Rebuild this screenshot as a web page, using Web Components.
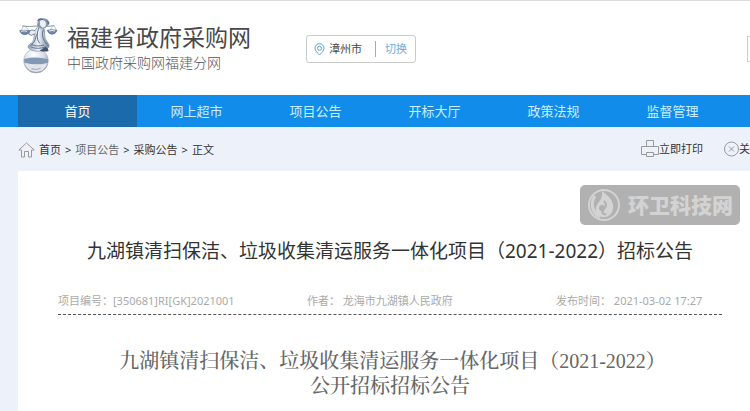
<!doctype html>
<html lang="zh-CN">
  <head>
    <meta charset="utf-8">
    <title>福建省政府采购网</title>
    <style>
      body {
        margin: 0;
        overflow: hidden;
        background: #edf1fa;
        color: #333;
        font: 11px/16px "Noto Sans", "Noto Sans CJK SC", sans-serif;
      }
    </style>
  </head>
  <body>
    <template id="gp-header">
      <style>
        :host {
          display: flex;
          align-items: center;
          height: 94px;
          border-top: 1px solid #ddd;
          padding-left: 18px;
          background: #fff;
        }
        .logo { width: 40px; height: 57px; flex: none; margin-bottom: 6px; }
        .names { margin: 0 55px 0 9px; }
        h1 { margin: 0; font-size: 23px; line-height: 30px; font-weight: 400; color: #484848; }
        p { margin: 0; font-size: 14px; line-height: 22px; font-weight: 300; color: #555; }
        .city {
          display: flex;
          align-items: center;
          box-sizing: border-box;
          width: 110px;
          height: 28px;
          border: 1px solid #ccc;
          border-radius: 3px;
          padding: 0 8px 0 7px;
          gap: 4px;
        }
        .city span { flex: 1; color: #444; }
        .city a { border-left: 1px solid #aaa; padding-left: 9px; color: #6aaee0; text-decoration: none; }
        .city, input { margin-top: 2px; }
        input {
          width: 3px;
          height: 26px;
          box-sizing: border-box;
          margin-left: auto;
          border: 1px solid #ccc;
          border-right: 0;
          padding: 0;
        }
      </style>
      <svg class="logo" viewBox="0 0 120 171" aria-hidden="true">
        <defs>
          <radialGradient id="ball" cx=".4" cy=".25" r=".8">
            <stop offset="0" stop-color="#fff"/>
            <stop offset=".55" stop-color="#d6dae5"/>
            <stop offset="1" stop-color="#76809a"/>
          </radialGradient>
          <linearGradient id="robe">
            <stop offset="0" stop-color="#8fa0b8"/>
            <stop offset=".5" stop-color="#f0f3f8"/>
            <stop offset="1" stop-color="#6d7f99"/>
          </linearGradient>
        </defs>
        <circle cx="54" cy="131" r="37" fill="url(#ball)" stroke="#b5bac8" stroke-width="2"/>
        <path d="M18 126q36 -9 72 1l-1 12q-36 7 -70 -2z" fill="#8299b6"/>
        <path d="M20 138q34 10 68 0q-7 26 -33 27q-26 -1 -35 -27" fill="#e3e5ec"/>
        <path d="M40 154q13 7 28 -1" fill="none" stroke="#b2b7cb" stroke-width="4"/>
        <g transform="translate(0 -7)">
          <path d="M60 35q-14 13 -12 31q0 17 -15 24q-8 8 6 16q22 9 48 -3q11 -7 3 -18q-11 -13 -10 -27q4 -14 -8 -23z" fill="url(#robe)" stroke="#8796ad" stroke-width="2"/>
          <path d="M63 38q-12 29 2 48M56 59q-4 23 -17 34M76 44q-9 23 10 45M37 96q20 10 47 0M38 88q15 10 40 3" fill="none" stroke="#667892" stroke-width="3"/>
          <path d="M82 97q9 3 10 12q-12 4 -27 -1" fill="#40526e"/>
          <path d="M51 48q-14 -5 -18 5q-4 7 7 9l12 -5" fill="#e9edf4" stroke="#7889a3" stroke-width="3"/>
          <path d="M12 34q23 3 43 0q20 3 54 -1" fill="none" stroke="#8b949f" stroke-width="3"/>
          <path d="M18 33L9 48M19 33l14 14M106 32L96 47M107 32l8 14" stroke="#a2aab8" stroke-width="2"/>
          <path d="M5 48q14 -3 31 0q-3 12 -16 12q-11 0 -15 -12M88 47q14 -4 29 0q-3 11 -15 12q-11 -1 -14 -12" fill="#7187a8" stroke="#596b87" stroke-width="2"/>
          <path d="M9 50q10 -3 18 0M93 49q9 -3 18 0" stroke="#e6edf7" stroke-width="3" fill="none"/>
        </g>
        <g transform="translate(4 -2)">
          <path d="M55 16q-3 -13 14 -10q14 -1 19 8q7 8 -4 15q-5 9 -16 8q-13 -1 -15 -10z" fill="#8798b3"/>
          <path d="M62 14q12 -8 18 5q1 14 -10 15q-11 -5 -8 -20" fill="#edf0f5"/>
          <path d="M55 12q8 -7 17 -2M82 13q8 4 4 11" stroke="#4b5f7d" stroke-width="3" fill="none"/>
        </g>
      </svg>
      <div class="names">
        <h1>福建省政府采购网</h1>
        <p>中国政府采购网福建分网</p>
      </div>
      <div class="city">
        <svg width="11" height="13" viewBox="0 0 11 13" fill="none" stroke="#55a5d5" aria-hidden="true">
          <path d="M5.500 12C3 9.500 1 7.500 1 5.200a4.500 4.500 0 0 1 9 0C10 7.500 8 9.500 5.500 12z"/>
          <circle cx="5.500" cy="5.300" r="2"/>
        </svg>
        <span>漳州市</span>
        <a href="#">切换</a>
      </div>
      <input type="text" aria-label="搜索">
    </template>

    <template id="gp-nav">
      <style>
        :host { display: block; background: #128cea; padding-left: 18px; }
        nav { display: flex; }
      </style>
      <nav><slot></slot></nav>
    </template>

    <template id="gp-nav-item">
      <style>
        :host { display: block; flex: 0 0 119px; }
        :host([active]) { background: #1b6bac; }
        a {
          display: block;
          font-size: 13px;
          line-height: 32px;
          text-align: center;
          color: #c8f0ff;
          text-decoration: none;
        }
        :host([active]) a { color: #fff; }
      </style>
      <a href="#"><slot></slot></a>
    </template>

    <template id="gp-toolbar">
      <style>
        :host { display: flex; align-items: center; height: 44px; padding-left: 18px; }
        nav { display: flex; align-items: center; gap: 4px; margin-right: auto; padding-top: 2px; }
        svg { flex: none; fill: none; stroke: #999; }
        a { color: #333; text-decoration: none; }
        a.dim { color: #666; }
        button {
          display: flex;
          align-items: center;
          border: 0;
          padding: 0;
          background: none;
          color: #333;
          font: inherit;
        }
        .print { margin-right: 21px; }
      </style>
      <nav aria-label="当前位置">
        <svg width="17" height="16" viewBox="0 0 17 16" aria-hidden="true">
          <path d="M3.500 8H.8L8.500 1l7.700 7h-2.700M3.500 8v7h3V9.500h4V15h3V8"/>
        </svg>
        <a href="#">首页</a><span>&gt;</span>
        <a href="#" class="dim">项目公告</a><span>&gt;</span>
        <a href="#">采购公告</a><span>&gt;</span>
        <a href="#">正文</a>
      </nav>
      <button class="print">
        <svg width="18" height="18" viewBox="0 0 18 18" aria-hidden="true">
          <path d="M5.500 6.500v-6h7v6M5.500 14.500h-5v-8h17v8h-5M5.500 12.500h7v4h-7z"/>
        </svg>
        立即打印
      </button>
      <button>
        <svg width="15" height="16" viewBox="0 0 15 16" aria-hidden="true">
          <circle cx="7.500" cy="8" r="7"/>
          <path d="M5 5.500l5 5M10 5.500l-5 5"/>
        </svg>
        关
      </button>
    </template>

    <template id="gp-notice">
      <style>
        :host {
          display: block;
          margin-left: 18px;
          padding: 66px 28px 12px 40px;
          background: #fff;
        }
        h2 { margin: 0; font-size: 19px; line-height: 28px; font-weight: 400; text-align: center; color: #333; }
        .meta {
          display: grid;
          grid-template-columns: 3fr 3fr 2fr;
          margin-top: 28px;
          padding-bottom: 5px;
          border-bottom: 1px dashed #555;
          color: #aaa;
          white-space: nowrap;
        }
        .body {
          margin-top: 34px;
          font: 500 20px/25px "Liberation Serif", "Noto Serif CJK SC", "Noto Sans CJK SC", serif;
          text-align: center;
          color: #666;
        }
      </style>
      <h2><slot name="title"></slot></h2>
      <div class="meta">
        <slot name="code"></slot>
        <slot name="author"></slot>
        <slot name="date"></slot>
      </div>
      <div class="body"><slot></slot></div>
    </template>

    <!-- floats over the notice card -->
    <template id="gp-watermark">
      <style>
        :host {
          position: absolute;
          top: 185px;
          right: 10px;
          display: flex;
          align-items: center;
          box-sizing: border-box;
          width: 160px;
          height: 40px;
          padding-left: 7px;
          gap: 7px;
          border-radius: 5px;
          background: #b1b1b1;
          color: #d3d3d3;
          font-size: 21px;
          line-height: 30px;
          font-weight: 900;
        }
      </style>
      <svg width="34" height="34" viewBox="0 0 34 34" fill="none" stroke="currentColor" aria-hidden="true">
        <circle cx="17" cy="17" r="15" stroke-width="2"/>
        <path d="M15 3C20 7 28 13 26 21c-1 6-6 9-11 8-6-1-8-7-5-12 2-4 6-6 5-14z" fill="currentColor" stroke="none"/>
        <path d="M8 8C3 15 5 25 13 29" stroke-width="3"/>
        <path d="M17 13c4 4 1 7-1 9-2 3 1 5 3 4" stroke="#b1b1b1" stroke-width="2"/>
        <circle cx="15" cy="20" r="3" fill="#b1b1b1" stroke="none"/>
      </svg>
      <slot></slot>
    </template>

    <script>
      class GpElement extends HTMLElement {
        constructor() {
          super();
          const t = document.getElementById(this.localName);
          this.attachShadow({mode: 'open'}).appendChild(t.content.cloneNode(true));
        }
      }
      for (const name of ['gp-header', 'gp-nav', 'gp-nav-item', 'gp-toolbar', 'gp-notice', 'gp-watermark']) {
        customElements.define(name, class extends GpElement {});
      }
    </script>

    <gp-header></gp-header>
    <gp-nav>
      <gp-nav-item active>首页</gp-nav-item>
      <gp-nav-item>网上超市</gp-nav-item>
      <gp-nav-item>项目公告</gp-nav-item>
      <gp-nav-item>开标大厅</gp-nav-item>
      <gp-nav-item>政策法规</gp-nav-item>
      <gp-nav-item>监督管理</gp-nav-item>
    </gp-nav>
    <gp-toolbar></gp-toolbar>
    <gp-notice>
      <span slot="title">九湖镇清扫保洁、垃圾收集清运服务一体化项目（2021-2022）招标公告</span>
      <span slot="code">项目编号：[350681]RI[GK]2021001</span>
      <span slot="author">作者： 龙海市九湖镇人民政府</span>
      <span slot="date">发布时间： 2021-03-02 17:27</span>
      &nbsp;九湖镇清扫保洁、垃圾收集清运服务一体化项目（2021-2022）<br>公开招标招标公告
    </gp-notice>
    <gp-watermark>环卫科技网</gp-watermark>
  </body>
</html>
